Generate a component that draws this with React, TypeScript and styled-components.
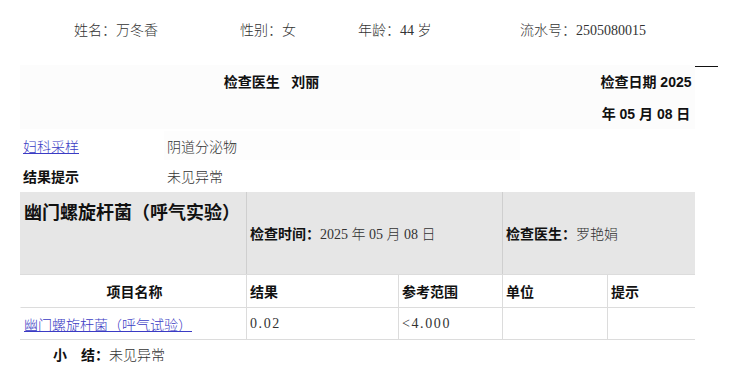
import styled, { createGlobalStyle } from 'styled-components';

const GlobalStyle = createGlobalStyle`
  html, body {
    margin: 0;
    padding: 0;
    background: #fff;
  }
  body {
    font-family: "Liberation Serif", "Noto Sans CJK SC", serif;
    font-size: 14px;
    color: #333;
  }
`;

const serif = `"Liberation Serif", "Noto Sans CJK SC", serif`;
const sans = `"Liberation Sans", "Noto Sans CJK SC", sans-serif`;

const Page = styled.div`
  width: 735px;
  padding-left: 20px;
  box-sizing: border-box;
`;

const InfoBar = styled.div`
  display: grid;
  grid-template-columns: 166px 118px 162px auto;
  padding: 20px 0 0 54px;
  line-height: 22px;
  font-family: ${serif};
  font-weight: 300;
  color: #333;
`;

const HeaderWrap = styled.div`
  display: flex;
  margin-top: 23px;
`;

const Header = styled.div`
  width: 675px;
  height: 64px;
  display: grid;
  grid-template-columns: 503px 74px 98px;
  background: #fcfcfc;
  font-family: ${sans};
  font-weight: 700;
  color: #111;
  line-height: 32px;
`;

const HeadCell = styled.div`
  text-align: center;
  padding-top: 1px;
`;

const Stub = styled.div`
  width: 23px;
  height: 0;
  margin-top: 1px;
  border-top: 1.5px solid #111;
`;

const InfoRow = styled.div<{ $h: number; $top?: number }>`
  display: grid;
  grid-template-columns: 144px 193px 163px 175px;
  width: 675px;
  height: ${(p) => p.$h}px;
  margin-top: ${(p) => p.$top ?? 0}px;
  align-items: center;
`;

const Label = styled.div`
  padding-left: 3px;
  font-family: ${sans};
  font-weight: 700;
  color: #111;
`;

const Value = styled.div<{ $faint?: boolean }>`
  height: 100%;
  display: flex;
  align-items: center;
  padding-left: 3px;
  font-family: ${serif};
  font-weight: 300;
  color: #333;
  background: ${(p) => (p.$faint ? '#fdfdfd' : 'transparent')};
`;

const Link = styled.a`
  color: #3b3bc4;
  text-decoration: underline;
  font-family: ${serif};
  font-weight: 300;
  padding-left: 3px;
  cursor: pointer;
`;

const GreyBlock = styled.div`
  width: 675px;
  height: 82px;
  display: grid;
  grid-template-columns: 226px 256px 193px;
  background: #e6e6e6;
`;

const GreyCell = styled.div<{ $top?: boolean }>`
  display: flex;
  align-items: ${(p) => (p.$top ? 'flex-start' : 'center')};
  padding-left: 3px;
  border-left: 1px solid ${(p) => (p.$top ? 'transparent' : '#cfcfcf')};
`;

const Title = styled.div`
  font-family: ${sans};
  font-weight: 700;
  font-size: 18px;
  line-height: 26px;
  padding-top: 8px;
  color: #111;
`;

const Strong = styled.span`
  font-family: ${sans};
  font-weight: 700;
  color: #111;
`;

const Plain = styled.span`
  font-family: ${serif};
  font-weight: 300;
  color: #333;
`;

const Table = styled.div`
  width: 675px;
  display: grid;
  grid-template-columns: 226px 152px 104px 105px 88px;
  border-bottom: 1px solid #dcdcdc;
`;

const Th = styled.div<{ $center?: boolean }>`
  height: 32px;
  display: flex;
  align-items: center;
  justify-content: ${(p) => (p.$center ? 'center' : 'flex-start')};
  padding-left: 3px;
  font-family: ${sans};
  font-weight: 700;
  color: #111;
  border-top: 1px solid #dcdcdc;
  border-left: 1px solid #dcdcdc;
  &:first-child {
    border-left: none;
  }
`;

const Td = styled.div<{ $num?: boolean; $first?: boolean }>`
  height: 31px;
  display: flex;
  align-items: center;
  padding-left: 3px;
  font-family: ${serif};
  font-size: 14px;
  letter-spacing: ${(p) => (p.$num ? '1.6px' : '0')};
  color: #333;
  border-top: 1px solid #dcdcdc;
  border-left: 1px solid ${(p) => (p.$first ? 'transparent' : '#dcdcdc')};
`;

const Summary = styled.div`
  padding: 4px 0 0 33px;
  line-height: 22px;
`;

const Gap = styled.span`
  display: inline-block;
  width: 14px;
`;

const App = () => {
  const cols = ['结果', '参考范围', '单位', '提示'];
  return (
    <>
      <GlobalStyle />
      <Page>
        <InfoBar>
          <span>姓名：万冬香</span>
          <span>性别：女</span>
          <span>年龄：44 岁</span>
          <span>流水号：2505080015</span>
        </InfoBar>

        <HeaderWrap>
          <Header>
            <HeadCell>检查医生&nbsp;&nbsp;&nbsp;刘丽</HeadCell>
            <div />
            <HeadCell>检查日期 2025 年 05 月 08 日</HeadCell>
          </Header>
          <Stub />
        </HeaderWrap>

        <InfoRow $h={29} $top={2}>
          <Link>妇科采样</Link>
          <Value $faint>阴道分泌物</Value>
          <Value $faint />
          <Value />
        </InfoRow>
        <InfoRow $h={32}>
          <Label>结果提示</Label>
          <Value>未见异常</Value>
          <div />
          <div />
        </InfoRow>

        <GreyBlock>
          <GreyCell $top>
            <Title>幽门螺旋杆菌（呼气实验）</Title>
          </GreyCell>
          <GreyCell>
            <Strong>检查时间：</Strong>
            <Plain>2025 年 05 月 08 日</Plain>
          </GreyCell>
          <GreyCell>
            <Strong>检查医生：</Strong>
            <Plain>罗艳娟</Plain>
          </GreyCell>
        </GreyBlock>

        <Table>
          <Th $center>项目名称</Th>
          {cols.map((c) => (
            <Th key={c}>{c}</Th>
          ))}
          <Td $first>
            <Link style={{ paddingLeft: 0 }}>幽门螺旋杆菌（呼气试验）</Link>
          </Td>
          <Td $num>0.02</Td>
          <Td $num>&lt;4.000</Td>
          <Td />
          <Td />
        </Table>

        <Summary>
          <Strong>小</Strong>
          <Gap />
          <Strong>结：</Strong>
          <Plain>未见异常</Plain>
        </Summary>
      </Page>
    </>
  );
};

export default App;
